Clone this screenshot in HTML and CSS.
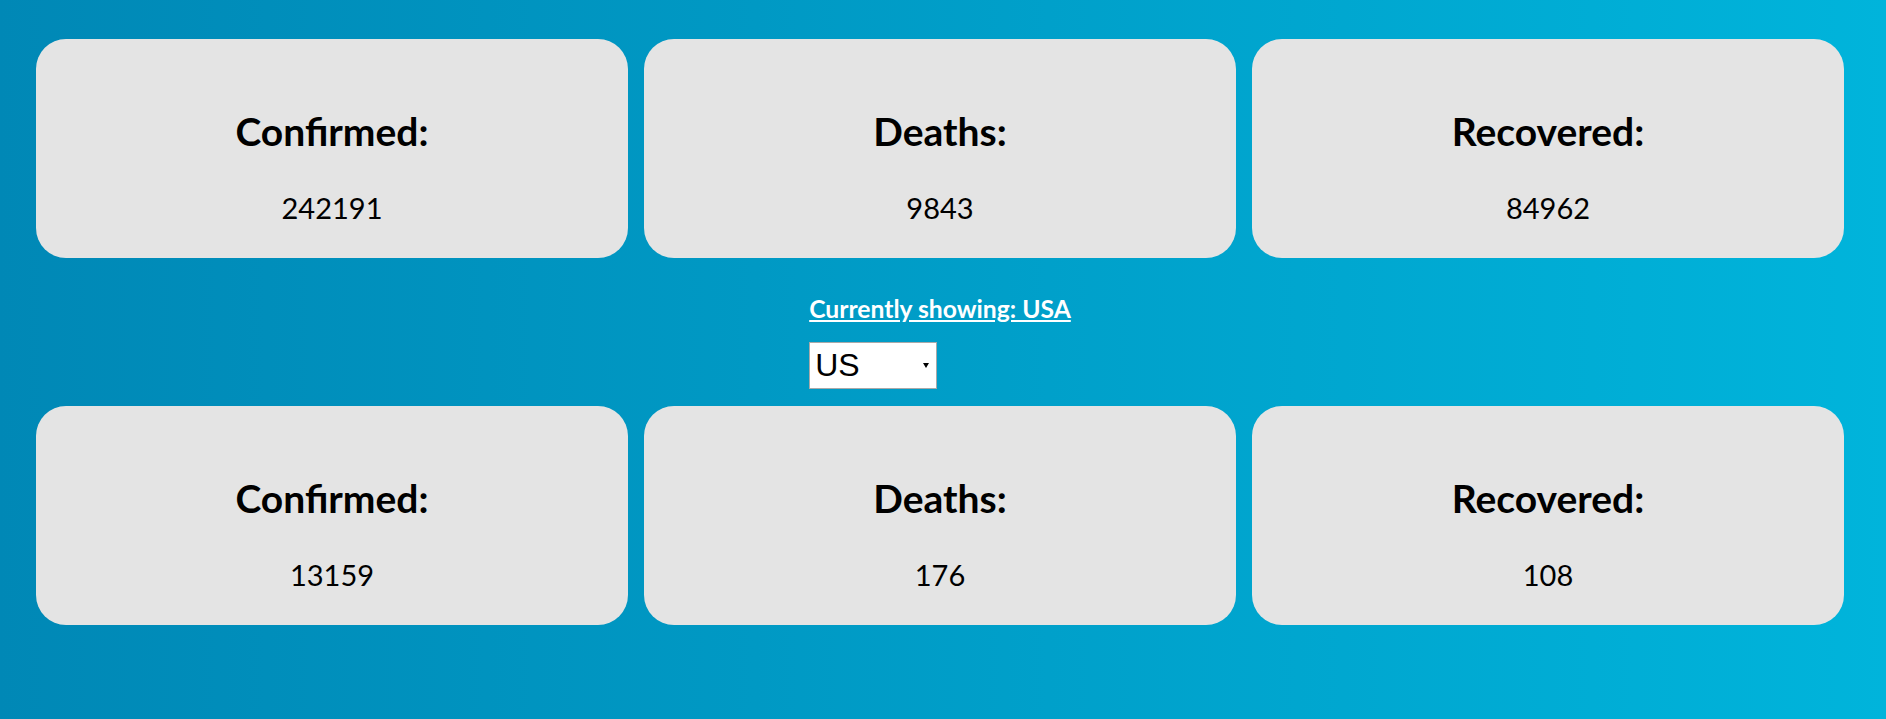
FILE: index.html
```html
<!DOCTYPE html>
<html lang="en">
<head>
<meta charset="utf-8">
<title>Corona Stats</title>
<link rel="stylesheet" href="styles.css">
</head>
<body>
<main class="page">
  <section class="row row-top">
    <div class="card"><h2 class="label">Confirmed:</h2><p class="value">242191</p></div>
    <div class="card"><h2 class="label">Deaths:</h2><p class="value">9843</p></div>
    <div class="card"><h2 class="label">Recovered:</h2><p class="value">84962</p></div>
  </section>
  <section class="picker">
    <div class="picker-inner">
      <a class="showing" href="#">Currently showing: USA</a>
      <div class="select-box"><span class="select-text">US</span><span class="select-arrow"></span></div>
    </div>
  </section>
  <section class="row">
    <div class="card"><h2 class="label">Confirmed:</h2><p class="value">13159</p></div>
    <div class="card"><h2 class="label">Deaths:</h2><p class="value">176</p></div>
    <div class="card"><h2 class="label">Recovered:</h2><p class="value">108</p></div>
  </section>
</main>
</body>
</html>
```

FILE: styles.css
```css
html, body {
  margin: 0;
  padding: 0;
}
body {
  min-height: 719px;
  background: linear-gradient(to right, #0088b6 0%, #0099c4 40%, #00b4db 100%);
  font-family: "Lato", "DejaVu Sans", sans-serif;
}
.page {
  display: flex;
  flex-direction: column;
}
.row {
  display: flex;
  gap: 16px;
  padding: 0 42px 0 36px;
}
.row-top {
  padding-top: 39px;
}
.card {
  flex: 1;
  height: 219px;
  box-sizing: border-box;
  background: #e4e4e4;
  border-radius: 30px;
  display: flex;
  flex-direction: column;
  align-items: center;
  padding-top: 71px;
  color: #000;
}
.label {
  margin: 0;
  font-size: 39px;
  line-height: 42px;
  font-weight: 700;
}
.value {
  margin: 39px 0 0;
  font-size: 29px;
  line-height: 34px;
  font-weight: 400;
}
.picker {
  display: flex;
  justify-content: center;
  padding: 37px 6px 17px 0;
}
.picker-inner {
  display: flex;
  flex-direction: column;
  align-items: flex-start;
  gap: 19px;
}
.showing {
  color: #fff;
  font-weight: 700;
  font-size: 24.7px;
  line-height: 28px;
  text-decoration: underline;
}
.select-box {
  width: 128px;
  height: 47px;
  box-sizing: border-box;
  background: #fff;
  border: 1px solid #a9a9a9;
  display: flex;
  align-items: center;
  justify-content: space-between;
  padding: 0 7px 0 5px;
}
.select-text {
  font-family: "Liberation Sans", Arial, sans-serif;
  font-size: 32px;
  color: #000;
}
.select-arrow {
  width: 0;
  height: 0;
  border-left: 3px solid transparent;
  border-right: 3px solid transparent;
  border-top: 5px solid #000;
}
```
